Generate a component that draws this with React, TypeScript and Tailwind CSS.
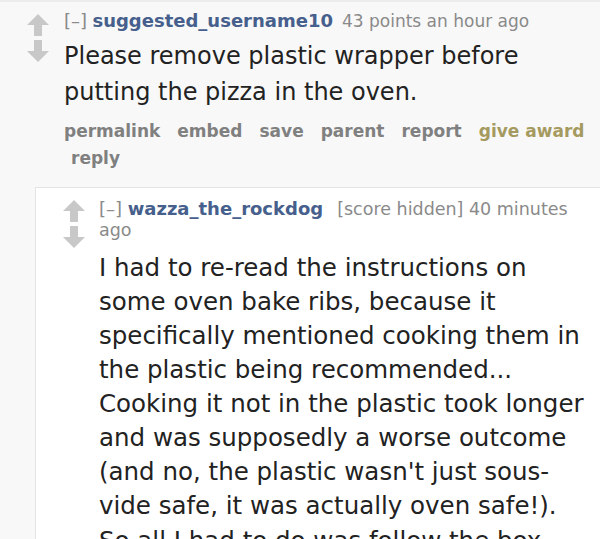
import React from 'react';

const font = "font-['DejaVu_Sans',Verdana,sans-serif]";

const Arrows = ({ className }: { className?: string }) => (
  <div className={`flex flex-col items-center shrink-0 ${className ?? ''}`}>
    <svg width="24" height="24" viewBox="0 0 24 24">
      <path d="M12 1 L23 12 L16 12 L16 23 L8 23 L8 12 L1 12 Z" fill="#c8c8c8" />
    </svg>
    <svg width="24" height="24" viewBox="0 0 24 24" className="mt-[2px]">
      <path d="M12 23 L23 12 L16 12 L16 1 L8 1 L8 12 L1 12 Z" fill="#c8c8c8" />
    </svg>
  </div>
);

const links = ['permalink', 'embed', 'save', 'parent', 'report'];

// line breaks kept as in the screenshot
const childLines = [
  'I had to re-read the instructions on',
  'some oven bake ribs, because it',
  'specifically mentioned cooking them in',
  'the plastic being recommended...',
  'Cooking it not in the plastic took longer',
  'and was supposedly a worse outcome',
  "(and no, the plastic wasn't just sous-",
  'vide safe, it was actually oven safe!).',
];

export default function App() {
  return (
    <div className={`w-[600px] h-[539px] overflow-hidden bg-[#f8f8f8] border-t-2 border-[#ececec] ${font}`}>
      {/* parent comment */}
      <div className="flex pl-[26px] pt-[9px]">
        <Arrows className="mt-[2px]" />
        <div className="ml-[14px] flex-1">
          <div className="text-[17px] leading-[20px]">
            <span className="text-[18px] text-[#8a8a8a]">[–]</span>{' '}
            <span className="text-[18px] font-bold text-[#465f8c]">suggested_username10</span>
            <span className="text-[#8a8a8a] ml-[9px]">43 points an hour ago</span>
          </div>
          <p className="text-[24px] leading-[36px] text-[#222] mt-[7px] w-[480px]">
            Please remove plastic wrapper before putting the pizza in the oven.
          </p>
          <div className="flex flex-wrap text-[17px] leading-[27px] font-bold text-[#808080] mt-[8px] w-[535px]">
            {links.map(l => (
              <span key={l} className="mr-[17px]">{l}</span>
            ))}
            <span className="text-[#a59a5f]">give award</span>
            <span className="ml-[7px] w-full">reply</span>
          </div>
        </div>
      </div>

      {/* child comment */}
      <div className="ml-[35px] mt-[15px] bg-white border-t border-l border-[#e4e4e4] flex pl-[26px] pt-[10px] h-[400px]">
        <Arrows className="mt-[1px]" />
        <div className="ml-[13px] w-[500px]">
          <div className="text-[17.5px] leading-[21px] w-[480px]">
            <span className="text-[18px] text-[#8a8a8a]">[–]</span>{' '}
            <span className="text-[18px] font-bold text-[#465f8c]">wazza_the_rockdog</span>
            <span className="text-[#8a8a8a] ml-[14px]">[score hidden] 40 minutes</span>{' '}
            <span className="text-[#8a8a8a]">ago</span>
          </div>
          <div className="text-[24.5px] leading-[34px] text-[#222] mt-[10px]">
            {childLines.map(line => (
              <div key={line} className="whitespace-nowrap">{line}</div>
            ))}
          </div>
          <p className="text-[24.5px] leading-[34px] text-[#222] mt-[1px] whitespace-nowrap">
            So all I had to do was follow the box.
          </p>
        </div>
      </div>
    </div>
  );
}
